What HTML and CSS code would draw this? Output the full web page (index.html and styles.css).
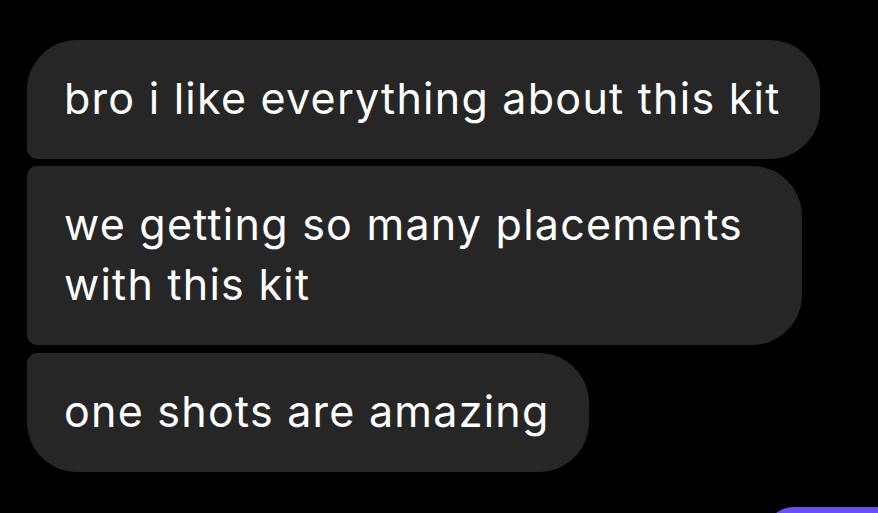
FILE: index.html
```html
<!DOCTYPE html>
<html>
<head>
    <title>Messages</title>
    <link rel="stylesheet" href="styles.css">
</head>
<body>
    <div class="thread">
        <div class="bubble received first">bro i like everything about this kit</div>
        <div class="bubble received middle">we getting so many placements<br>with this kit</div>
        <div class="bubble received last">one shots are amazing</div>
        <div class="bubble sent"></div>
    </div>
</body>
</html>
```

FILE: styles.css
```css
html, body {
    margin: 0;
    height: 100%;
    overflow: hidden;
    background-color: #000;
}
body {
    font-family: Inter, "Noto Sans", sans-serif;
}
.thread {
    display: flex;
    flex-direction: column;
    align-items: flex-start;
    gap: 7px;
    height: 100%;
    box-sizing: border-box;
    overflow: hidden;
    padding: 40px 0 0 27px;
}
.bubble {
    flex-shrink: 0;
    color: #fff;
    font-size: 43px;
    letter-spacing: 1.25px;
    line-height: 60px;
    padding: 28px 39px 31px 37px;
    background-color: #262626;
    border-radius: 50px;
}
.first {
    border-bottom-left-radius: 10px;
}
.middle {
    padding-right: 59px;
    border-top-left-radius: 10px;
    border-bottom-left-radius: 10px;
}
.last {
    border-top-left-radius: 10px;
    margin-top: 1px;
}
.sent {
    align-self: flex-end;
    width: 150px;
    height: 60px;
    padding: 0;
    margin-top: 28px;
    margin-right: -36px;
    background-color: #6b4ff5;
}
```
